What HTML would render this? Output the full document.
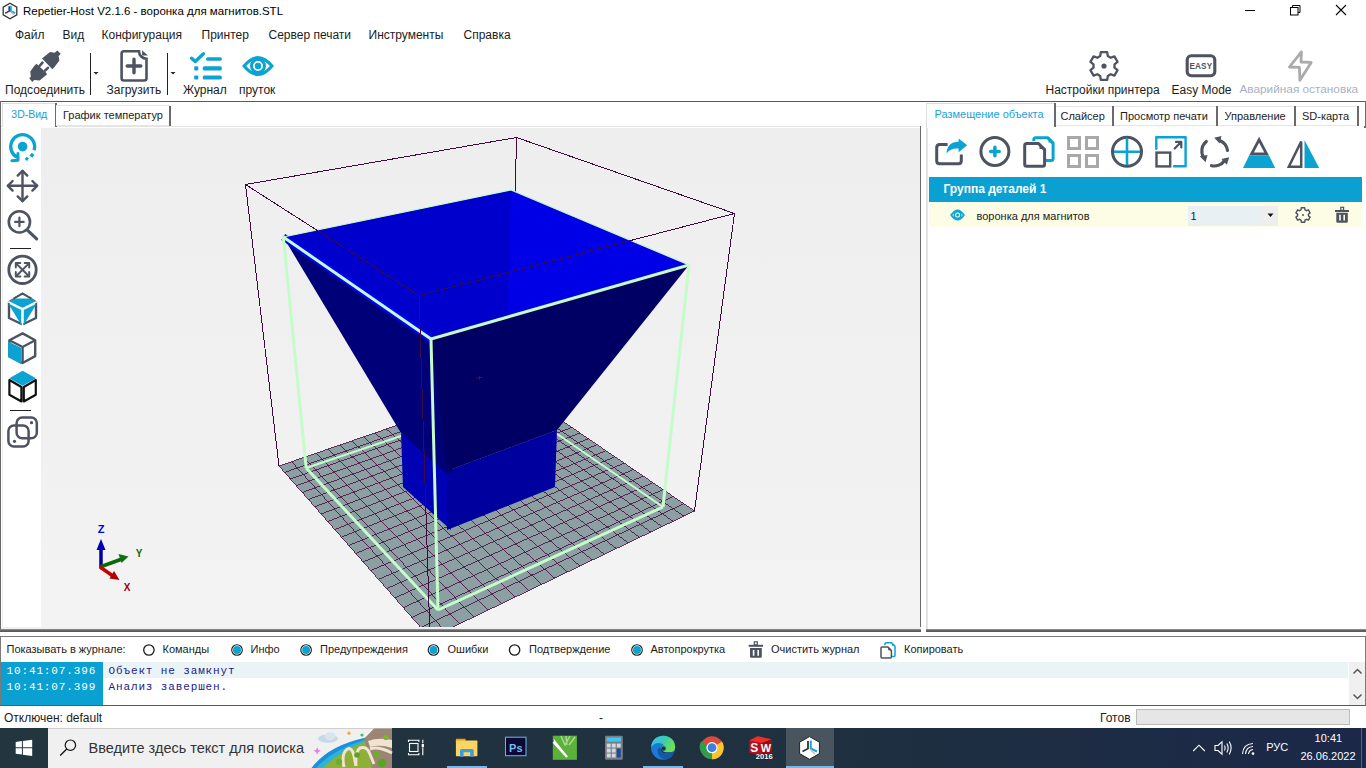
<!DOCTYPE html>
<html><head><meta charset="utf-8">
<style>
html,body{margin:0;padding:0;width:1366px;height:768px;overflow:hidden;background:#fff;position:relative;font-family:"Liberation Sans",sans-serif;}
.t{position:absolute;white-space:pre;line-height:1;}
.b{position:absolute;box-sizing:border-box;}
svg{position:absolute;overflow:visible;}
</style></head><body>
<!-- panels -->
<div class="b" style="left:0;top:101px;width:1366px;height:1px;background:#5a5a5a"></div>
<!-- left tab pane -->
<div class="b" style="left:0;top:101px;width:1px;height:530px;background:#6a6a6a"></div>
<div class="b" style="left:1px;top:126px;width:920px;height:505px;background:#fff;border-left:1px solid #e3e3e3;border-top:1px solid #e3e3e3;"></div>
<div class="b" style="left:41px;top:128px;width:879px;height:500px;background:#f0f0f0"></div>
<div class="b" style="left:920px;top:126px;width:1px;height:505px;background:#6a6a6a"></div>
<div class="b" style="left:0;top:629px;width:921px;height:3px;background:linear-gradient(#9a9a9a,#5a5a5a 60%,#5a5a5a)"></div>
<!-- left tabs -->
<div class="b" style="left:2px;top:103px;width:54px;height:24px;background:#fff;border-left:1px solid #e0e0e0;border-top:1px solid #e0e0e0"></div>
<div class="b" style="left:55px;top:103px;width:2px;height:24px;background:#6a6a6a"></div>
<div class="b" style="left:56px;top:105px;width:114px;height:21px;background:#fff;border-top:1px solid #e6e6e6;border-bottom:1px solid #e6e6e6"></div>
<div class="b" style="left:169px;top:106px;width:2px;height:20px;background:#6a6a6a"></div>
<!-- right tab pane -->
<div class="b" style="left:926px;top:126px;width:1px;height:505px;background:#dcdcdc"></div>
<div class="b" style="left:1364px;top:126px;width:2px;height:506px;background:#6a6a6a"></div>
<div class="b" style="left:1365px;top:101px;width:1px;height:25px;background:#6a6a6a"></div>
<div class="b" style="left:927px;top:128px;width:439px;height:502px;background:#fff;border-left:1px solid #e6e6e6"></div>
<div class="b" style="left:926px;top:629px;width:440px;height:3px;background:linear-gradient(#9a9a9a,#5a5a5a 60%,#5a5a5a)"></div>
<div class="b" style="left:926px;top:103px;width:129px;height:25px;background:#fff;border-left:1px solid #dcdcdc;border-top:1px solid #dcdcdc"></div>
<div class="b" style="left:1054px;top:103px;width:2px;height:24px;background:#6a6a6a"></div>
<div class="b" style="left:1056px;top:106px;width:57px;height:20px;border-top:1px solid #e6e6e6;border-bottom:1px solid #e6e6e6"></div>
<div class="b" style="left:1112px;top:106px;width:2px;height:20px;background:#6a6a6a"></div>
<div class="b" style="left:1114px;top:106px;width:103px;height:20px;border-top:1px solid #e6e6e6;border-bottom:1px solid #e6e6e6"></div>
<div class="b" style="left:1216px;top:106px;width:2px;height:20px;background:#6a6a6a"></div>
<div class="b" style="left:1218px;top:106px;width:77px;height:20px;border-top:1px solid #e6e6e6;border-bottom:1px solid #e6e6e6"></div>
<div class="b" style="left:1294px;top:106px;width:2px;height:20px;background:#6a6a6a"></div>
<div class="b" style="left:1296px;top:106px;width:62px;height:20px;border-top:1px solid #e6e6e6;border-bottom:1px solid #e6e6e6"></div>
<div class="b" style="left:1357px;top:106px;width:2px;height:20px;background:#6a6a6a"></div>
<!-- group header and row -->
<div class="b" style="left:929px;top:177px;width:433px;height:25px;background:#0aa0d2"></div>
<div class="b" style="left:929px;top:202px;width:433px;height:25px;background:#fdfde6"></div>
<div class="b" style="left:1188px;top:206px;width:90px;height:20px;background:#e8f0f4"></div>
<div class="b" style="left:1262px;top:206px;width:16px;height:20px;background:#eeeeee"></div>
<!-- log panel -->
<div class="b" style="left:0;top:636px;width:1366px;height:1px;background:#7a7a7a"></div>
<div class="b" style="left:0;top:636px;width:1px;height:70px;background:#7a7a7a"></div>
<div class="b" style="left:1365px;top:636px;width:1px;height:70px;background:#7a7a7a"></div>
<div class="b" style="left:0;top:705px;width:1366px;height:1px;background:#5a5a5a"></div>
<div class="b" style="left:1px;top:662px;width:102px;height:43px;background:#0aa0d2"></div>
<div class="b" style="left:103px;top:662px;width:1245px;height:16px;background:#eaf3f6"></div>
<div class="b" style="left:1349px;top:662px;width:16px;height:43px;background:#f0f0f0"></div>
<!-- status bar -->
<div class="b" style="left:1136px;top:709px;width:214px;height:16px;background:#e6e6e6;border:1px solid #bcbcbc"></div>
<!-- taskbar -->
<div class="b" style="left:0;top:728px;width:1366px;height:40px;background:linear-gradient(90deg,#22363f 0%,#1f3040 60%,#1b2848 100%)"></div>
<div class="b" style="left:48px;top:728px;width:344px;height:40px;background:#f0f0f0;border-top:1px solid #d0d0d0"></div>
<div class="b" style="left:786px;top:728px;width:48px;height:40px;background:#48545e"></div>
<div class="b" style="left:447px;top:766px;width:40px;height:2px;background:#76b9ed"></div>
<div class="b" style="left:643px;top:766px;width:40px;height:2px;background:#76b9ed"></div>
<div class="b" style="left:786px;top:766px;width:48px;height:2px;background:#76b9ed"></div>
<div class="b" style="left:1361px;top:728px;width:1px;height:40px;background:#5a6478"></div>
<svg style="left:0;top:0" width="1366" height="768" viewBox="0 0 1366 768">
<defs><clipPath id="vp"><rect x="41" y="128" width="879" height="499"/></clipPath><linearGradient id="bg" x1="0" y1="0" x2="0" y2="1"><stop offset="0" stop-color="#eeeeee"/><stop offset="1" stop-color="#f3f3f3"/></linearGradient></defs>
<rect x="41" y="128" width="879" height="499" fill="url(#bg)"/>
<g clip-path="url(#vp)">
<polygon points="279.0,466.0 430.0,638.0 694.5,511.0 511.0,386.0" fill="#8c9fa3"/>
<path d="M279.0 466.0L511.0 386.0M279.0 466.0L430.0 638.0M284.6 472.4L518.1 390.8M291.6 461.7L444.9 630.9M290.4 479.0L525.3 395.8M304.0 457.4L459.4 623.9M296.3 485.7L532.7 400.8M316.2 453.2L473.8 617.0M302.3 492.5L540.2 405.9M328.3 449.0L487.9 610.2M308.4 499.5L547.8 411.1M340.2 444.9L501.7 603.6M314.7 506.7L555.6 416.4M352.0 440.8L515.3 597.0M321.2 514.0L563.6 421.8M363.6 436.8L528.7 590.6M327.8 521.5L571.7 427.4M375.0 432.9L541.8 584.3M334.5 529.2L580.0 433.0M386.3 429.0L554.7 578.1M341.4 537.1L588.5 438.8M397.4 425.2L567.5 572.0M348.5 545.1L597.1 444.7M408.4 421.4L580.0 566.0M355.7 553.4L605.9 450.7M419.3 417.6L592.3 560.1M363.2 561.9L614.9 456.8M430.0 413.9L604.3 554.3M370.8 570.5L624.1 463.1M440.6 410.3L616.3 548.6M378.6 579.4L633.5 469.5M451.0 406.7L628.0 542.9M386.6 588.6L643.1 476.0M461.3 403.1L639.5 537.4M394.8 597.9L652.9 482.7M471.5 399.6L650.8 532.0M403.3 607.6L663.0 489.5M481.6 396.1L662.0 526.6M411.9 617.4L673.3 496.5M491.5 392.7L673.0 521.3M420.8 627.6L683.8 503.7M501.3 389.3L683.8 516.1M430.0 638.0L694.5 511.0M511.0 386.0L694.5 511.0" stroke="#46083c" stroke-width="0.8" fill="none" shape-rendering="crispEdges"/>
<line x1="245.5" y1="184.5" x2="516.5" y2="137.5" stroke="#3c0a3c" stroke-width="1.0" shape-rendering="crispEdges"/>
<line x1="516.5" y1="137.5" x2="734.5" y2="213.5" stroke="#3c0a3c" stroke-width="1.0" shape-rendering="crispEdges"/>
<line x1="516.5" y1="137.5" x2="511" y2="386" stroke="#3c0a3c" stroke-width="1.0" shape-rendering="crispEdges"/>
<line x1="245.5" y1="184.5" x2="279" y2="466" stroke="#3c0a3c" stroke-width="1.0" shape-rendering="crispEdges"/>
<line x1="734.5" y1="213.5" x2="694.5" y2="511" stroke="#3c0a3c" stroke-width="1.0" shape-rendering="crispEdges"/>
<line x1="306.2" y1="468" x2="508" y2="400" stroke="#c4fcca" stroke-width="2" />
<line x1="663" y1="507" x2="508" y2="400" stroke="#c4fcca" stroke-width="2" />
<polygon points="401.0,433.0 451.0,471.0 451.0,530.0 403.0,487.0" fill="#0000b4"/>
<polygon points="447.0,471.0 557.0,430.0 555.0,487.0 447.0,530.0" fill="#00009e"/>
<polygon points="283.3,237.0 437.0,339.0 453.0,473.0 447.0,474.0 401.0,433.0" fill="#000078"/>
<polygon points="431.0,339.0 689.0,265.0 557.0,430.0 447.0,471.0" fill="#000064"/>
<polygon points="283.3,237.0 511.0,190.0 689.0,265.0 431.0,339.0" fill="#0000cc"/>
<polygon points="511.0,190.0 689.0,265.0 507.5,317.0" fill="#0000e6"/>
<polyline points="283.3,237.0 431.0,339.0" fill="none" stroke="#0000ff" stroke-width="7"/>
<line x1="283.3" y1="237" x2="431" y2="339" stroke="#c4fcca" stroke-width="3" />
<line x1="431" y1="339" x2="689" y2="265" stroke="#c4fcca" stroke-width="3" />
<line x1="283.3" y1="237" x2="306.2" y2="468" stroke="#c4fcca" stroke-width="3" />
<line x1="689" y1="265" x2="663" y2="507" stroke="#c4fcca" stroke-width="3" />
<line x1="431" y1="339" x2="438" y2="610" stroke="#c4fcca" stroke-width="3" />
<line x1="306.2" y1="468" x2="438" y2="610" stroke="#c4fcca" stroke-width="3" />
<line x1="438" y1="610" x2="663" y2="507" stroke="#c4fcca" stroke-width="3" />
<line x1="283.3" y1="237" x2="511" y2="190" stroke="#c4fcca" stroke-width="1.2" />
<line x1="511" y1="190" x2="689" y2="265" stroke="#c4fcca" stroke-width="1.2" />
<path d="M477,377.5 H481.5 M479.5,375.5 V380 M476,378.5 H477" stroke="#5a0a40" stroke-width="1" shape-rendering="crispEdges"/>
<line x1="245.5" y1="184.5" x2="419" y2="295.5" stroke="#3c0a3c" stroke-width="1.0" shape-rendering="crispEdges"/>
<line x1="419" y1="295.5" x2="734.5" y2="213.5" stroke="#3c0a3c" stroke-width="1.0" shape-rendering="crispEdges"/>
<line x1="419" y1="295.5" x2="430" y2="638" stroke="#3c0a3c" stroke-width="1.0" shape-rendering="crispEdges"/>
</g>
</svg><div class="t" style="left:23.0px;top:5.76px;font-size:11.5px;color:#000;font-family:'Liberation Sans';font-weight:400;">Repetier-Host V2.1.6 - воронка для магнитов.STL</div>
<div class="t" style="left:15.0px;top:28.64px;font-size:12px;color:#1c1c1c;font-family:'Liberation Sans';font-weight:400;">Файл</div>
<div class="t" style="left:62.5px;top:28.64px;font-size:12px;color:#1c1c1c;font-family:'Liberation Sans';font-weight:400;">Вид</div>
<div class="t" style="left:101.5px;top:28.64px;font-size:12px;color:#1c1c1c;font-family:'Liberation Sans';font-weight:400;">Конфигурация</div>
<div class="t" style="left:201.5px;top:28.64px;font-size:12px;color:#1c1c1c;font-family:'Liberation Sans';font-weight:400;">Принтер</div>
<div class="t" style="left:268.5px;top:28.64px;font-size:12px;color:#1c1c1c;font-family:'Liberation Sans';font-weight:400;">Сервер печати</div>
<div class="t" style="left:368.5px;top:28.64px;font-size:12px;color:#1c1c1c;font-family:'Liberation Sans';font-weight:400;">Инструменты</div>
<div class="t" style="left:463.5px;top:28.64px;font-size:12px;color:#1c1c1c;font-family:'Liberation Sans';font-weight:400;">Справка</div>
<div class="t" style="left:5.0px;top:83.64px;font-size:12px;color:#1c1c1c;font-family:'Liberation Sans';font-weight:400;">Подсоединить</div>
<div class="t" style="left:106.5px;top:83.64px;font-size:12px;color:#1c1c1c;font-family:'Liberation Sans';font-weight:400;">Загрузить</div>
<div class="t" style="left:183.0px;top:83.64px;font-size:12px;color:#1c1c1c;font-family:'Liberation Sans';font-weight:400;">Журнал</div>
<div class="t" style="left:239.0px;top:83.64px;font-size:12px;color:#1c1c1c;font-family:'Liberation Sans';font-weight:400;">пруток</div>
<div class="t" style="left:1045.5px;top:83.64px;font-size:12px;color:#1c1c1c;font-family:'Liberation Sans';font-weight:400;">Настройки принтера</div>
<div class="t" style="left:1171.5px;top:83.64px;font-size:12px;color:#1c1c1c;font-family:'Liberation Sans';font-weight:400;">Easy Mode</div>
<div class="t" style="left:1239.5px;top:83.81px;font-size:11.8px;color:#a9b1c2;font-family:'Liberation Sans';font-weight:400;">Аварийная остановка</div>
<div class="t" style="left:11.3px;top:109.31px;font-size:10.5px;color:#1a9fd8;font-family:'Liberation Sans';font-weight:400;">3D-Вид</div>
<div class="t" style="left:63.0px;top:110.39px;font-size:11px;color:#1c1c1c;font-family:'Liberation Sans';font-weight:400;">График температур</div>
<div class="t" style="left:934.5px;top:109.19px;font-size:11px;color:#1a9fd8;font-family:'Liberation Sans';font-weight:400;">Размещение объекта</div>
<div class="t" style="left:1060.5px;top:110.69px;font-size:11px;color:#1c1c1c;font-family:'Liberation Sans';font-weight:400;">Слайсер</div>
<div class="t" style="left:1120.0px;top:110.69px;font-size:11px;color:#1c1c1c;font-family:'Liberation Sans';font-weight:400;">Просмотр печати</div>
<div class="t" style="left:1224.5px;top:110.69px;font-size:11px;color:#1c1c1c;font-family:'Liberation Sans';font-weight:400;">Управление</div>
<div class="t" style="left:1302.0px;top:110.69px;font-size:11px;color:#1c1c1c;font-family:'Liberation Sans';font-weight:400;">SD-карта</div>
<div class="t" style="left:943.5px;top:182.84px;font-size:12px;color:#fff;font-family:'Liberation Sans';font-weight:700;">Группа деталей 1</div>
<div class="t" style="left:976.5px;top:211.19px;font-size:11px;color:#1c1c1c;font-family:'Liberation Sans';font-weight:400;">воронка для магнитов</div>
<div class="t" style="left:1190.5px;top:211.19px;font-size:11px;color:#1c1c1c;font-family:'Liberation Sans';font-weight:400;">1</div>
<div class="t" style="left:6.5px;top:644.19px;font-size:11px;color:#1c1c1c;font-family:'Liberation Sans';font-weight:400;">Показывать в журнале:</div>
<div class="t" style="left:162.5px;top:644.19px;font-size:11px;color:#1c1c1c;font-family:'Liberation Sans';font-weight:400;">Команды</div>
<div class="t" style="left:250.5px;top:644.19px;font-size:11px;color:#1c1c1c;font-family:'Liberation Sans';font-weight:400;">Инфо</div>
<div class="t" style="left:320.0px;top:644.19px;font-size:11px;color:#1c1c1c;font-family:'Liberation Sans';font-weight:400;">Предупреждения</div>
<div class="t" style="left:447.5px;top:644.19px;font-size:11px;color:#1c1c1c;font-family:'Liberation Sans';font-weight:400;">Ошибки</div>
<div class="t" style="left:529.0px;top:644.19px;font-size:11px;color:#1c1c1c;font-family:'Liberation Sans';font-weight:400;">Подтверждение</div>
<div class="t" style="left:650.5px;top:644.19px;font-size:11px;color:#1c1c1c;font-family:'Liberation Sans';font-weight:400;">Автопрокрутка</div>
<div class="t" style="left:771.0px;top:644.19px;font-size:11px;color:#1c1c1c;font-family:'Liberation Sans';font-weight:400;">Очистить журнал</div>
<div class="t" style="left:904.0px;top:644.19px;font-size:11px;color:#1c1c1c;font-family:'Liberation Sans';font-weight:400;">Копировать</div>
<div class="t" style="left:6.5px;top:666.07px;font-size:11px;color:#fff;font-family:'Liberation Mono';font-weight:400;letter-spacing:0.87px">10:41:07.396</div>
<div class="t" style="left:6.5px;top:681.77px;font-size:11px;color:#fff;font-family:'Liberation Mono';font-weight:400;letter-spacing:0.87px">10:41:07.399</div>
<div class="t" style="left:108.5px;top:666.07px;font-size:11px;color:#1a1a8c;font-family:'Liberation Mono';font-weight:400;letter-spacing:0.87px">Объект не замкнут</div>
<div class="t" style="left:108.5px;top:681.77px;font-size:11px;color:#1a1a8c;font-family:'Liberation Mono';font-weight:400;letter-spacing:0.87px">Анализ завершен.</div>
<div class="t" style="left:4.0px;top:711.74px;font-size:12px;color:#1c1c1c;font-family:'Liberation Sans';font-weight:400;">Отключен: default</div>
<div class="t" style="left:599.0px;top:711.74px;font-size:12px;color:#1c1c1c;font-family:'Liberation Sans';font-weight:400;">-</div>
<div class="t" style="left:1100.0px;top:711.84px;font-size:12px;color:#1c1c1c;font-family:'Liberation Sans';font-weight:400;">Готов</div>
<div class="t" style="left:88.5px;top:741.22px;font-size:14.5px;color:#333;font-family:'Liberation Sans';font-weight:400;">Введите здесь текст для поиска</div>
<div class="t" style="left:1266.2px;top:742.29px;font-size:11px;color:#fff;font-family:'Liberation Sans';font-weight:400;">РУС</div>
<div class="t" style="left:1314.6px;top:733.29px;font-size:11px;color:#fff;font-family:'Liberation Sans';font-weight:400;">10:41</div>
<div class="t" style="left:1300.5px;top:750.99px;font-size:11px;color:#fff;font-family:'Liberation Sans';font-weight:400;">26.06.2022</div>
<!-- ICONS -->
<svg style="left:0;top:0" width="1366" height="768" viewBox="0 0 1366 768">
<!-- title icon -->
<g>
<polygon points="10,3.2 16.8,7.1 16.8,14.9 10,18.7 3.2,14.9 3.2,7.1" fill="#fff" stroke="#333" stroke-width="1.3"/>
<path d="M9.2,6.3 V11.2 L5.2,13.2" stroke="#3a3f48" stroke-width="1.6" fill="none"/>
<path d="M10.9,5.8 V11.2 L15.2,13" stroke="#1aa5d5" stroke-width="1.8" fill="none"/>
<path d="M10.8,11.8 L13.8,14.4" stroke="#b8b8b8" stroke-width="1.4" fill="none"/>
<path d="M9.6,11.9 L6.5,14.2" stroke="#dedede" stroke-width="1.2" fill="none"/>
</g>
<!-- window controls -->
<line x1="1245" y1="10.5" x2="1255" y2="10.5" stroke="#000" stroke-width="1"/>
<rect x="1290.5" y="7.5" width="7.5" height="7.5" fill="none" stroke="#000" stroke-width="1"/>
<path d="M1292.5,7.5 V5.5 H1300 V12.5 H1298" fill="none" stroke="#000" stroke-width="1"/>
<path d="M1336,5 L1346,15 M1346,5 L1336,15" stroke="#000" stroke-width="1.1"/>

<!-- plug -->
<g fill="#4d5360">
<polygon points="42,58.5 50,52 54.7,52.8 57.3,50.4 60.7,53.8 58.6,56.2 59.4,60.6 54.7,66.8 52.4,69.2"/>
<polygon points="30.25,71.5 34.2,66 36.5,63.7 46.4,73.1 46.9,74.4 39.6,80.6 34.2,79.9 32.3,81.9 29.2,78.3 30.8,76.7"/>
</g>
<path d="M39.6,65.8 L42.5,62.7 M45.1,70.5 L48,67.9" stroke="#4d5360" stroke-width="2.6" stroke-linecap="round"/>
<!-- separators & dropdown arrows -->
<rect x="90" y="53" width="1" height="42" fill="#222"/>
<polygon points="93.5,72 98.5,72 96,74.5" fill="#222"/>
<rect x="167" y="53" width="1" height="42" fill="#222"/>
<polygon points="170.5,72 175.5,72 173,74.5" fill="#222"/>
<!-- doc plus -->
<path d="M121.6,53.5 Q121.6,51.2 123.9,51.2 H139 A7.5,7.5 0 0 0 146.5,58.7 V78.2 Q146.5,80.5 144.2,80.5 H123.9 Q121.6,80.5 121.6,78.2 Z" fill="none" stroke="#4d5360" stroke-width="2.6"/>
<polygon points="142.1,50.2 147.9,55.6 142.1,55.6" fill="#4d5360"/>
<path d="M134,59.2 V72.8 M127.2,66 H140.8" stroke="#4d5360" stroke-width="3.4" stroke-linecap="round"/>
<!-- journal -->
<g fill="#0aa3d2">
<path d="M191.6,58.2 L195.2,61.4 L203.5,53.8" fill="none" stroke="#0aa3d2" stroke-width="3.4" stroke-linecap="round" stroke-linejoin="round"/>
<rect x="206.1" y="57.2" width="15.7" height="3.6" rx="1.5"/>
<rect x="194.2" y="66.3" width="4.1" height="4.2" rx="1.2"/>
<rect x="202.75" y="66.3" width="19.05" height="4.2" rx="1.5"/>
<rect x="194.2" y="75.4" width="4.1" height="4.2" rx="1.2"/>
<rect x="202.75" y="75.4" width="19.05" height="4.2" rx="1.5"/>
</g>
<!-- eye -->
<path d="M242,66 Q258,46 274,66 Q258,86 242,66 Z M246.2,66 Q258,52.4 269.8,66 Q258,79.6 246.2,66 Z" fill="#0aa3d2" fill-rule="evenodd"/>
<circle cx="258" cy="66" r="6.5" fill="none" stroke="#0aa3d2" stroke-width="3"/>
<circle cx="258" cy="66" r="3.2" fill="#0aa3d2"/>
<!-- gear -->
<path d="M1100.20,56.10 L1100.81,52.16 L1107.19,52.16 L1107.80,56.10 L1110.67,57.76 L1114.39,56.32 L1117.58,61.85 L1114.47,64.34 L1114.47,67.66 L1117.58,70.15 L1114.39,75.68 L1110.67,74.24 L1107.80,75.90 L1107.19,79.84 L1100.81,79.84 L1100.20,75.90 L1097.33,74.24 L1093.61,75.68 L1090.42,70.15 L1093.53,67.66 L1093.53,64.34 L1090.42,61.85 L1093.61,56.32 L1097.33,57.76Z" fill="none" stroke="#4d5360" stroke-width="2.3" stroke-linejoin="round"/>
<circle cx="1104" cy="66" r="2.6" fill="#4d5360"/>
<!-- easy -->
<rect x="1187.2" y="55.8" width="27.6" height="19.9" rx="4" fill="none" stroke="#4d5360" stroke-width="3.1"/>
<text x="1200.9" y="68.8" font-family="Liberation Sans" font-weight="700" font-size="8.2" fill="#4d5360" text-anchor="middle" letter-spacing="0.1">EASY</text>
<!-- lightning -->
<polygon points="1301.4,51.8 1289.4,67 1299.4,67.4 1299.9,80.3 1311.2,62.4 1301,62" fill="none" stroke="#ababab" stroke-width="2.8" stroke-linejoin="round"/>

<!-- left toolbar -->
<rect x="1" y="127" width="40" height="500" fill="#fff"/>
<rect x="2" y="128" width="1" height="499" fill="#f0f0f0"/>
<rect x="1" y="627" width="920" height="2" fill="#f0f0f0"/>
<!-- rotate -->
<g>
<path d="M34.1,150.3 A12,12 0 1 0 17.2,157.3" fill="none" stroke="#0aa3d2" stroke-width="3.2"/>
<path d="M17.9,153.5 L18.1,160.2 L11.9,160.7" fill="none" stroke="#0aa3d2" stroke-width="3" stroke-linejoin="round" stroke-linecap="round"/>
<circle cx="22.6" cy="146.6" r="4.8" fill="#0aa3d2"/>
<rect x="30.2" y="153.5" width="3.6" height="3.6" fill="#0aa3d2" transform="rotate(40 32 155.3)"/>
<rect x="25.3" y="157.3" width="3" height="3" fill="#0aa3d2" transform="rotate(40 26.8 158.8)"/>
</g>
<!-- move -->
<g stroke="#4d5360" stroke-width="2.4" fill="none" stroke-linecap="round" stroke-linejoin="round">
<path d="M8,185.8 H37 M22.5,171 V201"/>
<path d="M17.7,175.6 L22.5,170.8 L27.3,175.6 M17.7,196.4 L22.5,201.2 L27.3,196.4 M12.6,181 L7.8,185.8 L12.6,190.6 M32.4,181 L37.2,185.8 L32.4,190.6"/>
</g>
<!-- zoom -->
<g stroke="#4d5360" fill="none">
<circle cx="19.4" cy="221.9" r="10.6" stroke-width="2.6"/>
<path d="M27.9,230.6 L36.6,238.8" stroke-width="3.2" stroke-linecap="round"/>
<path d="M19.4,217.6 V226.2 M15.1,221.9 H23.7" stroke-width="2.2" stroke-linecap="round"/>
</g>
<rect x="10" y="248" width="21" height="1" fill="#222"/>
<!-- fit -->
<g stroke="#4d5360" fill="none" stroke-linecap="round" stroke-linejoin="round">
<circle cx="22.5" cy="269.8" r="13.7" stroke-width="2.8"/>
<path d="M16.3,263.6 L28.7,276 M28.7,263.6 L16.3,276" stroke-width="2"/>
<path d="M15.8,267.6 V263.1 H20.3 M24.7,263.1 H29.2 V267.6 M29.2,272 V276.5 H24.7 M20.3,276.5 H15.8 V272" stroke-width="2"/>
</g>
<!-- cube front -->
<g>
<polygon points="22.5,293.8 36,302.3 36,318 22.5,324.5 9,318 9,302.3" fill="#fff" stroke="#4d5360" stroke-width="2.4" stroke-linejoin="round"/>
<polygon points="8.2,302 22.5,293.2 36.8,302 22.5,308.5" fill="#0aa3d2"/>
<polygon points="13,298.5 22.5,293.2 32,298.5" fill="#fff"/>
<path d="M13.5,298.6 L22.5,293.6 L31.5,298.6" fill="none" stroke="#4d5360" stroke-width="2"/>
<polygon points="8.2,303.5 21.3,310 21.3,325" fill="#0aa3d2"/>
<polygon points="36.8,303.5 23.7,310 23.7,325" fill="#0aa3d2"/>
<path d="M8.2,301.8 L22.5,308.8 L36.8,301.8 M22.5,308.8 V326" stroke="#fff" stroke-width="1.6" fill="none"/>
</g>
<!-- cube side -->
<g>
<polygon points="22.6,333.4 35.2,340.3 35.2,356.1 22.6,363 9.4,356.1 9.4,340.3" fill="#fff" stroke="#4d5360" stroke-width="2.4" stroke-linejoin="round"/>
<path d="M9.4,340.3 L22.6,347 L35.2,340.3 M22.6,347 V363" stroke="#4d5360" stroke-width="2.4" fill="none"/>
<polygon points="8.2,341.5 21.4,348 21.4,364.2 8.2,357.2" fill="#0aa3d2"/>
</g>
<!-- cube top -->
<g>
<polygon points="22.6,370.8 36,378.2 22.6,385.8 9.2,378.2" fill="#0aa3d2"/>
<path d="M9.4,380 L21.4,387 V401.5 L9.4,394.8 Z M35.8,380 L23.8,387 V401.5 L35.8,394.8 Z" fill="none" stroke="#111" stroke-width="2.2" stroke-linejoin="round"/>
</g>
<rect x="10" y="410" width="21" height="1" fill="#222"/>
<!-- overlap -->
<g fill="none" stroke="#4d5360" stroke-width="2.5">
<rect x="16.6" y="417.5" width="20.2" height="20.8" rx="5.5"/>
<rect x="8.4" y="425.6" width="20.2" height="20.8" rx="5.5"/>
</g>
<circle cx="31.5" cy="422.7" r="1.6" fill="#4d5360"/>
<circle cx="14.5" cy="441.3" r="1.6" fill="#4d5360"/>

<!-- axis indicator -->
<g>
<path d="M101,568 V548" stroke="#0000a0" stroke-width="3.5"/>
<polygon points="96.5,550 101,539 105.5,550" fill="#0000b0"/>
<path d="M100,567 L122,559" stroke="#0a6a0a" stroke-width="3.5"/>
<polygon points="118.5,554 128.5,556.5 121.5,563" fill="#127012"/>
<path d="M100,567 L113,576" stroke="#c80000" stroke-width="3.5"/>
<polygon points="109.5,578.5 119.5,580 114,571" fill="#b00000"/>
<text x="101" y="533" font-family="Liberation Sans" font-weight="700" font-size="11" fill="#0000e0" text-anchor="middle">Z</text>
<text x="139" y="557" font-family="Liberation Sans" font-weight="700" font-size="10" fill="#0a6a0a" text-anchor="middle">Y</text>
<text x="127" y="591" font-family="Liberation Sans" font-weight="700" font-size="10" fill="#a00000" text-anchor="middle">X</text>
</g>
<!-- right toolbar -->
<g>
<path d="M947.6,144.5 H939.7 Q936.7,144.5 936.7,147.5 V160.8 Q936.7,163.8 939.7,163.8 H958.3 Q961.3,163.8 961.3,160.8 V154.4" fill="none" stroke="#4d5360" stroke-width="3"/>
<path d="M946.5,153.5 Q947,142 958.6,141.8 L958.6,138.5 L967.2,145.3 L958.6,152.2 L958.6,148.6 Q950.5,148 946.5,153.5 Z" fill="#0aa3d2"/>
<circle cx="994.9" cy="151.5" r="14" fill="none" stroke="#4d5360" stroke-width="3"/>
<path d="M994.9,147.2 V155.8 M990.6,151.5 H999.2" stroke="#0aa3d2" stroke-width="3.5" stroke-linecap="round"/>
<!-- copy -->
<path d="M1033.8,141 V139.8 Q1033.8,137.8 1035.8,137.8 H1047.5 L1053.1,143.4 V158.5 Q1053.1,160.5 1051.1,160.5 H1046" fill="none" stroke="#0aa3d2" stroke-width="3"/>
<polygon points="1048.5,136.3 1054.6,142.4 1048.5,142.4" fill="#0aa3d2"/>
<path d="M1024.7,145.5 Q1024.7,143.5 1026.7,143.5 H1038.4 L1044.6,149.7 V164.2 Q1044.6,166.2 1042.6,166.2 H1026.7 Q1024.7,166.2 1024.7,164.2 Z" fill="#fff" stroke="#4d5360" stroke-width="3"/>
<polygon points="1039.5,143 1045.6,149.1 1039.5,149.1" fill="#4d5360"/>
<!-- grid gray -->
<g fill="none" stroke="#a9a9a9" stroke-width="3">
<rect x="1068.5" y="137.5" width="11" height="11"/><rect x="1086.5" y="137.5" width="11" height="11"/>
<rect x="1068.5" y="155.5" width="11" height="11"/><rect x="1086.5" y="155.5" width="11" height="11"/>
</g>
<!-- crosshair -->
<circle cx="1127" cy="151.7" r="14.5" fill="none" stroke="#4d5360" stroke-width="3"/>
<path d="M1114,151.7 H1140 M1127,138.5 V165" stroke="#0aa3d2" stroke-width="2.6"/>
<!-- scale -->
<path d="M1156.3,148.8 V137.3 H1185.6 V166.3 H1174" fill="none" stroke="#0aa3d2" stroke-width="2.4" stroke-linecap="round" stroke-linejoin="round"/>
<rect x="1156.5" y="152.6" width="13.7" height="13.8" fill="none" stroke="#4d5360" stroke-width="2.4"/>
<path d="M1174.7,148.5 L1181,142 M1176,141.9 H1181.3 V147.4" fill="none" stroke="#4d5360" stroke-width="2.2" stroke-linecap="round" stroke-linejoin="round"/>
<!-- rotate -->
<g fill="none" stroke="#4d5360" stroke-width="3.2" stroke-linecap="round">
<path d="M1206.3,141.5 A12.3,12.3 0 0 0 1203.3,157"/>
<path d="M1219.5,140.5 A12.3,12.3 0 0 1 1227.5,150.5"/>
<path d="M1211.5,165.7 A12.3,12.3 0 0 0 1224.5,160.5"/>
</g>
<g fill="#4d5360">
<polygon points="1199.8,156.2 1207.5,155 1205.6,162.2"/>
<polygon points="1214.2,137.7 1221.5,136.1 1219.7,143.5"/>
<polygon points="1221.5,159 1229.3,157.2 1226.8,164.7"/>
</g>
<!-- triangle -->
<polygon points="1259.1,136.7 1249.3,155.2 1268.9,155.2" fill="#4d5360"/>
<polygon points="1259.1,142.8 1253.9,152.4 1264.3,152.4" fill="#fff"/>
<polygon points="1249.3,155.2 1268.9,155.2 1275.2,168 1243,168" fill="#0aa3d2"/>
<!-- mirror -->
<path d="M1301.2,141.5 V166.7 H1288.8 Z" fill="none" stroke="#4d5360" stroke-width="2.5" stroke-linejoin="miter"/>
<polygon points="1304.5,140 1319.2,168 1304.5,168" fill="#0aa3d2"/>
</g>
<!-- row icons -->
<path d="M950.1,215 Q957.6,203.8 965,215 Q957.6,226.2 950.1,215 Z M952.3,215 Q957.6,207.8 962.8,215 Q957.6,222.2 952.3,215 Z" fill="#10a5d5" fill-rule="evenodd"/>
<circle cx="957.6" cy="215" r="3.3" fill="none" stroke="#10a5d5" stroke-width="1.6"/>
<circle cx="957.6" cy="215" r="1.5" fill="#10a5d5"/>
<polygon points="1267.5,213.5 1273.5,213.5 1270.5,217" fill="#111"/>
<path d="M1301.03,209.87 L1301.34,207.79 L1304.66,207.79 L1304.97,209.87 L1306.46,210.73 L1308.41,209.95 L1310.08,212.84 L1308.43,214.14 L1308.43,215.86 L1310.08,217.16 L1308.41,220.05 L1306.46,219.27 L1304.97,220.13 L1304.66,222.21 L1301.34,222.21 L1301.03,220.13 L1299.54,219.27 L1297.59,220.05 L1295.92,217.16 L1297.57,215.86 L1297.57,214.14 L1295.92,212.84 L1297.59,209.95 L1299.54,210.73Z" fill="none" stroke="#4d5360" stroke-width="1.4" stroke-linejoin="round"/>
<circle cx="1303" cy="215" r="1" fill="#4d5360"/>
<g fill="#4d5360">
<rect x="1335" y="210" width="14" height="2"/>
<rect x="1340.8" y="207.3" width="2.8" height="3" fill="none" stroke="#4d5360" stroke-width="1.2"/>
<path d="M1336.3,212.8 H1347.8 V221.5 Q1347.8,222.8 1346.5,222.8 H1337.6 Q1336.3,222.8 1336.3,221.5 Z M1339.2,214.8 V220.6 H1340.8 V214.8 Z M1343.4,214.8 V220.6 H1345 V214.8 Z" fill-rule="evenodd"/>
</g>
<!-- log toolbar -->
<g fill="none" stroke="#1a1a1a" stroke-width="1.3">
<circle cx="148.9" cy="650" r="5.2"/>
<circle cx="514.6" cy="650" r="5.2"/>
</g>
<g>
<circle cx="237" cy="650" r="5.3" fill="none" stroke="#1a1a1a" stroke-width="1.1"/><circle cx="237" cy="650" r="4" fill="#0aa3d2"/>
<circle cx="306.1" cy="650" r="5.3" fill="none" stroke="#1a1a1a" stroke-width="1.1"/><circle cx="306.1" cy="650" r="4" fill="#0aa3d2"/>
<circle cx="433.5" cy="650" r="5.3" fill="none" stroke="#1a1a1a" stroke-width="1.1"/><circle cx="433.5" cy="650" r="4" fill="#0aa3d2"/>
<circle cx="637" cy="650" r="5.3" fill="none" stroke="#1a1a1a" stroke-width="1.1"/><circle cx="637" cy="650" r="4" fill="#0aa3d2"/>
</g>
<g fill="#4d5360">
<rect x="748.7" y="644.8" width="14.3" height="2"/>
<rect x="754.3" y="641.8" width="3" height="3" fill="none" stroke="#4d5360" stroke-width="1.2"/>
<path d="M750,648 H761.8 V656.5 Q761.8,657.8 760.5,657.8 H751.3 Q750,657.8 750,656.5 Z M752.8,650 V655.8 H754.4 V650 Z M757.4,650 V655.8 H759 V650 Z" fill-rule="evenodd"/>
</g>
<path d="M885,645.2 V643.8 Q885,642.8 886,642.8 H891.6 L895,646.2 V655.4 Q895,656.4 894,656.4 H891.6" fill="none" stroke="#0aa3d2" stroke-width="1.5"/>
<polygon points="892,642.4 895.4,645.8 892,645.8" fill="#0aa3d2"/>
<path d="M881,648 Q881,647 882,647 H887.8 L891.4,650.6 V656.9 Q891.4,657.9 890.4,657.9 H882 Q881,657.9 881,656.9 Z" fill="#fff" stroke="#4d5360" stroke-width="1.5"/>
<polygon points="888.2,646.6 891.8,650.2 888.2,650.2" fill="#4d5360"/>
<!-- log scroll arrows -->
<path d="M1353.5,673.5 L1357.5,669.5 L1361.5,673.5 M1353.5,694.5 L1357.5,698.5 L1361.5,694.5" fill="none" stroke="#555" stroke-width="1.5"/>
<!-- TASKBAR -->
<g fill="#fff">
<polygon points="15.7,741.9 21.9,741.1 21.9,747.3 15.7,747.3"/>
<polygon points="22.9,740.9 32.2,739.7 32.2,747.3 22.9,747.3"/>
<polygon points="15.7,748.3 21.9,748.3 21.9,754.6 15.7,753.8"/>
<polygon points="22.9,748.3 32.2,748.3 32.2,756.1 22.9,754.8"/>
</g>
<circle cx="70.4" cy="745.2" r="5.2" fill="none" stroke="#111" stroke-width="1.2"/>
<path d="M66.7,749 L60.2,755.5" stroke="#111" stroke-width="1.3"/>
<!-- landscape -->
<g>
<ellipse cx="328" cy="738.6" rx="10" ry="4.2" fill="#c6d9e6"/>
<ellipse cx="330" cy="736.2" rx="5.5" ry="4" fill="#d6e5ef"/>
<circle cx="349" cy="733.2" r="1.6" fill="#f5a623"/>
<circle cx="362" cy="735" r="1.6" fill="#3cc36a"/>
<path d="M317.2,747.3 L318.3,749.9 L321,750.8 L318.4,752 L317.2,754.6 L316,752 L313.4,750.8 L316.1,749.9 Z" fill="#e77ae9"/>
<path d="M311.5,768 Q328,746 364,738 L392,730 L392,768 Z" fill="#1d8ed8"/>
<path d="M316,768 Q332,750 364,740 L392,732 L392,768 Z" fill="#2ab4d8"/>
<path d="M323,768 Q336,754 364,742 L392,734 L392,768 Z" fill="#8fb038"/>
<path d="M364,739 L374,728.5 L392,728.5 L392,768 L372,768 Q368,752 364,739 Z" fill="#9b8676"/>
<path d="M368,741 Q378,737 392,740 L392,748 Q380,744 370,747 Z" fill="#f2e2d0"/>
<path d="M344,767 Q341,753 347.5,749 Q352,747 354,756 L356,766 M356,766 Q355,752 360,748 Q366,746 369,752 L374,764 M370,749 Q378,746 392,753" fill="none" stroke="#f2e2d0" stroke-width="3"/>
<circle cx="357" cy="755" r="2.8" fill="#58a326"/>
<circle cx="339" cy="762" r="3.2" fill="#6aae2a"/>
<circle cx="376.5" cy="754" r="3.3" fill="#6aae2a"/>
<circle cx="382" cy="763" r="4.2" fill="#5aa524"/>
<circle cx="386" cy="737.5" r="2.6" fill="#7ab82c"/>
</g>
<!-- task view -->
<g fill="none" stroke="#fff" stroke-width="1.1">
<rect x="409.5" y="743.5" width="8.5" height="8"/>
<path d="M408.5,742 V740.3 H418.9 V742 M408.5,753 V754.8 H418.9 V753 M422.8,739.8 V743.2 M422.8,747.5 V755.2"/>
</g>
<rect x="421.7" y="744" width="2.2" height="3.2" fill="#fff"/>
<!-- folder -->
<g>
<rect x="455.9" y="738.8" width="9.7" height="3" rx="0.6" fill="#e8a317"/>
<rect x="455.9" y="740.5" width="21.5" height="15.7" rx="0.8" fill="#fcd462"/>
<path d="M460,756.7 V750.5 Q460,749 461.5,749 H472.3 Q473.8,749 473.8,750.5 V756.7 H470.2 V752.2 H463.6 V756.7 Z" fill="#3f9be0"/>
</g>
<!-- Ps -->
<rect x="505.5" y="737.2" width="20.5" height="18.5" fill="#0a0a36" stroke="#6cb6ef" stroke-width="1"/>
<text x="515.8" y="751.5" font-family="Liberation Sans" font-weight="700" font-size="11" fill="#79bdf2" text-anchor="middle">Ps</text>
<!-- corel -->
<rect x="552.8" y="735.7" width="24.1" height="24.1" fill="#5cb13b"/>
<path d="M561,736 L565,745 L570,736 M566,736 L567,745 M575,737 L569,745" stroke="#a8d890" stroke-width="1.5" fill="none"/>
<path d="M553.5,738.5 L568.5,757.5 L555,745 Z" fill="#fff"/>
<path d="M553.5,742 L567,757" stroke="#fff" stroke-width="2.2"/>
<!-- calc -->
<rect x="605" y="735.7" width="17.8" height="24.1" rx="1.2" fill="#7a7e84"/>
<rect x="606.8" y="737.5" width="14.2" height="4.1" fill="#3ec8f0"/>
<g fill="#d2d9e0">
<rect x="606.8" y="743.6" width="3.9" height="3.9"/><rect x="611.8" y="743.6" width="3.9" height="3.9"/><rect x="616.8" y="743.6" width="3.9" height="3.9"/>
<rect x="606.8" y="748.6" width="3.9" height="3.9"/><rect x="611.8" y="748.6" width="3.9" height="3.9"/>
<rect x="606.8" y="753.6" width="3.9" height="3.9"/><rect x="611.8" y="753.6" width="3.9" height="3.9"/>
</g>
<rect x="616.8" y="748.6" width="3.9" height="8.9" fill="#1a4a9a"/>
<!-- edge -->
<defs><linearGradient id="edg" x1="0" y1="0" x2="1" y2="0.4"><stop offset="0" stop-color="#2ec6f0"/><stop offset="0.55" stop-color="#3cc8b8"/><stop offset="1" stop-color="#6de150"/></linearGradient></defs>
<g>
<circle cx="663.1" cy="747.8" r="12" fill="#1a7ad6"/>
<path d="M651.1,747.5 C651.5,739.5 657.5,735.8 663.5,735.8 C670.5,735.8 675.2,741 675.2,747 C675.2,750.6 672.6,752.3 669.6,752.3 L666,752.3 C663.2,752.3 661.4,750.8 661.4,748.6 C661.4,746.6 662.6,745.4 664.2,745.2 C660,741.8 654,742.5 651.1,747.5 Z" fill="url(#edg)"/>
<path d="M661.2,749.2 Q662,752.9 666,753 L674.5,753" fill="none" stroke="#1d3344" stroke-width="1.2"/>
<path d="M657.5,749.5 Q657.3,757.5 665,759.6 Q671.5,759 673.8,753.6 L666,753.6 Q660.8,753.4 660.4,747.5 Q658.5,747.5 657.5,749.5 Z" fill="#1158a8"/>
<circle cx="663.6" cy="748.5" r="2.2" fill="#22363f"/>
</g>
<!-- chrome -->
<g>
<circle cx="712" cy="747.7" r="11.5" fill="#dd4a3a"/>
<path d="M712,747.7 L702,753.5 A11.5,11.5 0 0 0 712,759.2 L718,753 Z" fill="#2f9e4a"/>
<path d="M712,747.7 L701,741.5 A11.5,11.5 0 0 0 702,753.5 Z" fill="#2f9e4a"/>
<path d="M712,747.7 L722,741.6 A11.5,11.5 0 0 1 712,759.2 Z" fill="#f8c52c"/>
<circle cx="712" cy="747.7" r="5.6" fill="#fff"/>
<circle cx="712" cy="747.7" r="4.4" fill="#3e7fe6"/>
</g>
<!-- SW -->
<g>
<polygon points="749.3,740.5 757.5,736.2 771.8,739.3 771.8,752.5 760.5,756 749.3,752.5" fill="#b80f1a"/>
<polygon points="749.3,740.5 757.5,736.2 771.8,739.3 762,743" fill="#e63028"/>
<polygon points="762,743 771.8,739.3 771.8,752.5 762,756" fill="#9a0c14"/>
<text x="754.2" y="751.8" font-family="Liberation Sans" font-weight="700" font-size="12" fill="#fff" text-anchor="middle">S</text>
<text x="766" y="751.8" font-family="Liberation Sans" font-weight="700" font-size="11" fill="#fff" text-anchor="middle">W</text>
<text x="764.2" y="758.8" font-family="Liberation Sans" font-weight="700" font-size="7.6" fill="#fff" stroke="#1a1a1a" stroke-width="0.8" paint-order="stroke" text-anchor="middle">2016</text>
</g>
<!-- repetier taskbar icon -->
<g>
<polygon points="809.5,736.6 819.4,742.2 819.4,753.6 809.5,759.3 799.6,753.6 799.6,742.2" fill="#fff" stroke="#222" stroke-width="1"/>
<path d="M808,741 V748.5 L802.5,751.5" stroke="#333" stroke-width="1.8" fill="none"/>
<path d="M810.8,740.5 V748.5 L817,751.5" stroke="#1aa5d5" stroke-width="2" fill="none"/>
<path d="M810.5,749.5 L815,754" stroke="#c0c0c0" stroke-width="1.6" fill="none"/>
</g>
<!-- tray -->
<path d="M1193.2,751 L1199,745.2 L1204.8,751" fill="none" stroke="#fff" stroke-width="1.1"/>
<g fill="none" stroke="#fff" stroke-width="1.1">
<path d="M1215,745.5 H1218 L1222,741.8 V754.2 L1218,750.5 H1215 Z"/>
<path d="M1224.5,745.5 Q1226,748 1224.5,750.5 M1226.8,743.5 Q1229.5,748 1226.8,752.5 M1229.2,741.5 Q1233,748 1229.2,754.5"/>
</g>
<g fill="none" stroke="#fff" stroke-width="1.1">
<path d="M1242.5,754 Q1243,744 1253,743.5 M1245.5,754 Q1246,747 1253,746.5 M1248.5,754 Q1249,750 1253,749.5"/>
</g>
<circle cx="1253" cy="753.6" r="1.3" fill="#fff"/>
</svg>
</body></html>
